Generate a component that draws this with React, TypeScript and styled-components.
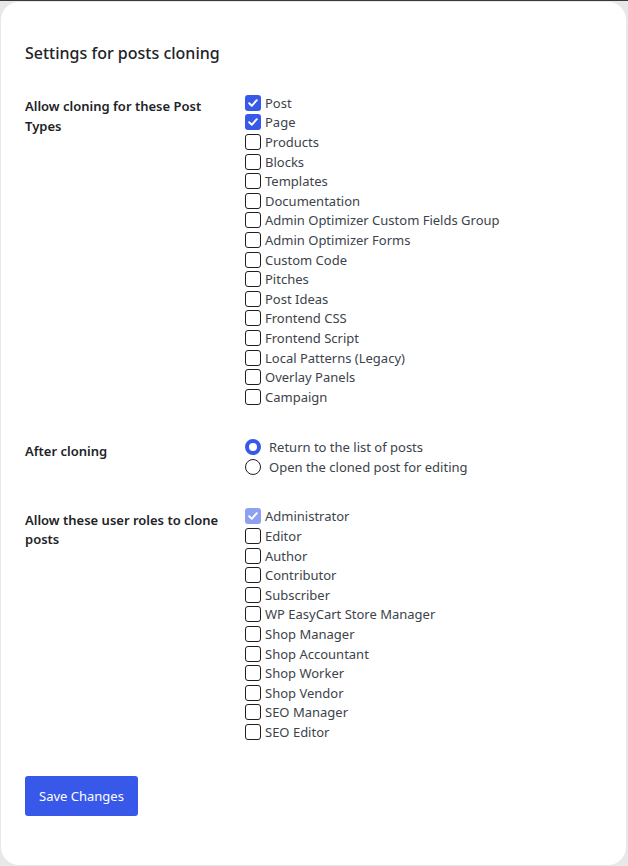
import React from "react";
import styled, { createGlobalStyle } from "styled-components";

const GlobalStyle = createGlobalStyle`
  html, body {
    margin: 0;
    padding: 0;
  }
  body {
    background: #e8e8e8;
    border-top: 1px solid #3a3a3a;
    padding: 1px 2px 2px 1px;
    font-family: "Noto Sans", "Open Sans", sans-serif;
    -webkit-font-smoothing: antialiased;
  }
`;

const Card = styled.form`
  background: #fff;
  border-radius: 18px;
  padding: 41px 24px 49px;
`;

const Title = styled.h2`
  margin: 0;
  font-size: 16px;
  line-height: 21px;
  font-weight: 500;
  color: #1d2327;
`;

const Table = styled.div`
  margin-top: 15px;
`;

const Row = styled.div`
  display: grid;
  grid-template-columns: 200px 1fr;
  column-gap: 20px;
  padding: 15px 0;

  &:first-child {
    padding: 14px 0 16px;
  }
`;

const Label = styled.div`
  padding-top: 4px;
  font-size: 13px;
  line-height: 19.5px;
  font-weight: 600;
  color: #1d2327;
`;

const Options = styled.div`
  display: flex;
  flex-direction: column;
`;

const Option = styled.label`
  display: flex;
  align-items: center;
  gap: ${(p: { $gap: number }) => p.$gap}px;
  height: 19.6px;
  font-size: 13px;
  color: #3c434a;
`;

const Box = styled.span<{ $checked?: boolean; $disabled?: boolean }>`
  box-sizing: border-box;
  width: 16px;
  height: 16px;
  flex: none;
  display: flex;
  align-items: center;
  justify-content: center;
  border-radius: 3px;
  border: ${(p) => (p.$checked ? "none" : "1.5px solid #1e1e1e")};
  background: ${(p) =>
    p.$checked ? (p.$disabled ? "#8ea0f1" : "#3858e9") : "#fff"};
`;

const Round = styled.span<{ $checked?: boolean }>`
  box-sizing: border-box;
  width: 16px;
  height: 16px;
  flex: none;
  border-radius: 50%;
  border: ${(p) => (p.$checked ? "4.5px solid #3858e9" : "1.5px solid #1e1e1e")};
  background: #fff;
`;

const SaveButton = styled.button`
  margin-top: 19px;
  height: 40px;
  padding: 0 14px;
  border: none;
  border-radius: 3px;
  background: #3858e9;
  color: #fff;
  font-family: inherit;
  font-size: 13px;
  cursor: pointer;
`;

const postTypes: [string, boolean][] = [
  ["Post", true],
  ["Page", true],
  ["Products", false],
  ["Blocks", false],
  ["Templates", false],
  ["Documentation", false],
  ["Admin Optimizer Custom Fields Group", false],
  ["Admin Optimizer Forms", false],
  ["Custom Code", false],
  ["Pitches", false],
  ["Post Ideas", false],
  ["Frontend CSS", false],
  ["Frontend Script", false],
  ["Local Patterns (Legacy)", false],
  ["Overlay Panels", false],
  ["Campaign", false],
];

const roles = [
  "Editor",
  "Author",
  "Contributor",
  "Subscriber",
  "WP EasyCart Store Manager",
  "Shop Manager",
  "Shop Accountant",
  "Shop Worker",
  "Shop Vendor",
  "SEO Manager",
  "SEO Editor",
];

function Check({ checked, disabled }: { checked?: boolean; disabled?: boolean }) {
  return (
    <Box $checked={checked} $disabled={disabled}>
      {checked && (
        <svg width="12" height="12" viewBox="0 0 12 12">
          <path
            d="M2.2 6.3 L4.8 8.8 L9.8 3.2"
            fill="none"
            stroke="#fff"
            strokeWidth="2"
            strokeLinecap="round"
            strokeLinejoin="round"
          />
        </svg>
      )}
    </Box>
  );
}

export default function App() {
  return (
    <>
      <GlobalStyle />
      <Card onSubmit={(e) => e.preventDefault()}>
        <Title>Settings for posts cloning</Title>
        <Table>
          <Row>
            <Label>Allow cloning for these Post Types</Label>
            <Options>
              {postTypes.map(([name, on]) => (
                <Option key={name} $gap={4}>
                  <Check checked={on} />
                  {name}
                </Option>
              ))}
            </Options>
          </Row>
          <Row>
            <Label>After cloning</Label>
            <Options>
              <Option $gap={8}>
                <Round $checked />
                Return to the list of posts
              </Option>
              <Option $gap={8}>
                <Round />
                Open the cloned post for editing
              </Option>
            </Options>
          </Row>
          <Row>
            <Label>Allow these user roles to clone posts</Label>
            <Options>
              <Option $gap={4}>
                <Check checked disabled />
                Administrator
              </Option>
              {roles.map((name) => (
                <Option key={name} $gap={4}>
                  <Check />
                  {name}
                </Option>
              ))}
            </Options>
          </Row>
        </Table>
        <SaveButton type="submit">Save Changes</SaveButton>
      </Card>
    </>
  );
}
